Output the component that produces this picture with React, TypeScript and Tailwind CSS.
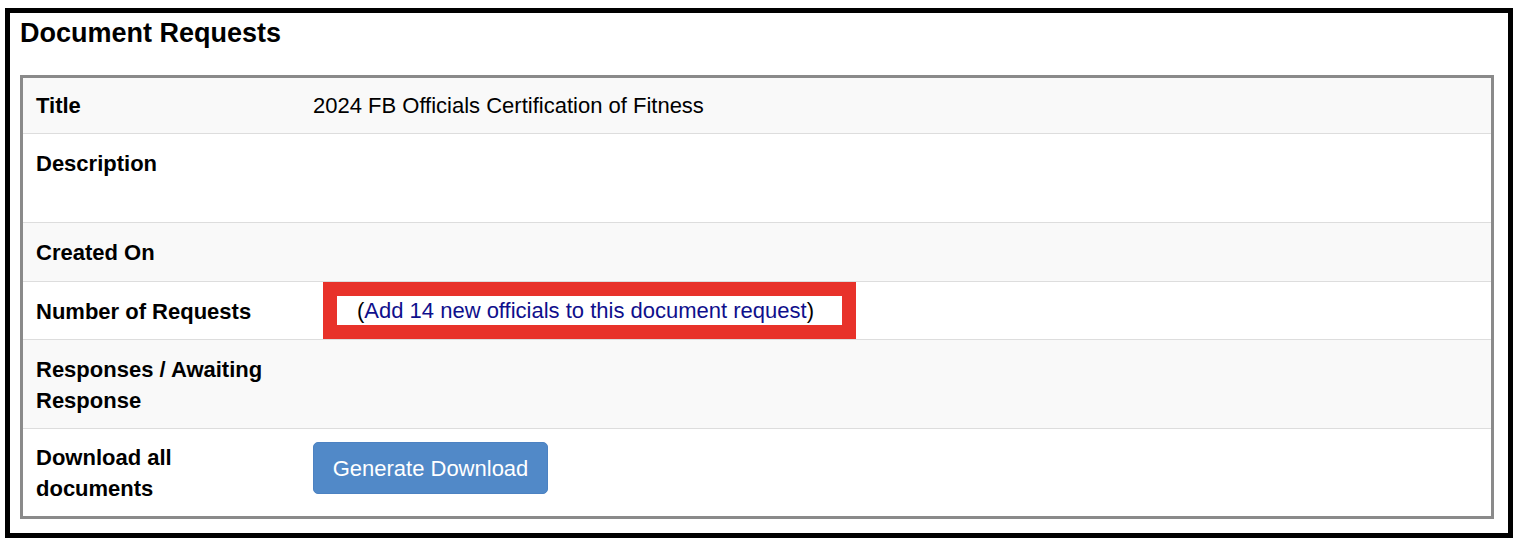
import React from 'react';

type Row = {
  label: React.ReactNode;
  value?: React.ReactNode;
  striped: boolean;
  pad: string;
  tall?: boolean;
  flush?: boolean;
};

const RequestsLink: React.FC = () => (
  <div className="flex h-[57px] w-[533px] items-center border-[14px] border-[#e8322a] bg-white pl-[20px] leading-[29px]">
    <span className="text-black">(</span>
    <a href="#" className="text-[#0f0f8c]">Add 14 new officials to this document request</a>
    <span className="text-black">)</span>
  </div>
);

const App: React.FC = () => {
  const rows: Row[] = [
    { label: 'Title', value: '2024 FB Officials Certification of Fitness', striped: true, pad: 'pt-[12px] pb-[12px]' },
    { label: 'Description', striped: false, tall: true, pad: 'pt-[14px] pb-[12px]' },
    { label: 'Created On', striped: true, pad: 'pt-[14px] pb-[13px]' },
    { label: 'Number of Requests', value: <RequestsLink />, striped: false, flush: true, pad: 'pt-[14px] pb-[12px]' },
    { label: <>Responses / Awaiting<br />Response</>, striped: true, pad: 'pt-[14px] pb-[12px]' },
    {
      label: <>Download all<br />documents</>,
      value: (
        <button className="flex h-[52px] w-[235px] items-center justify-center rounded-[5px] border border-[#4c82c2] bg-[#5189c8] text-white">
          Generate Download
        </button>
      ),
      striped: false,
      pad: 'pt-[13px] pb-[12px]',
    },
  ];

  return (
    <div className="min-h-[550px] bg-white pt-[8px] pl-[5px] font-['Liberation_Sans',Arial,sans-serif] text-black">
      <div className="h-[530px] w-[1508px] border-[5px] border-black pl-[10px] pr-[14px]">
        <h2 className="pt-[5px] mb-[27px] text-[27px] font-bold leading-[30px]">Document Requests</h2>

        <div className="border-[3px] border-[#8a8a8a] text-[22px] leading-[31px]">
          {rows.map((row, i) => (
            <div
              key={i}
              className={`flex ${i === 0 ? '' : 'border-t border-[#dddddd]'} ${row.striped ? 'bg-[#f9f9f9]' : 'bg-white'}`}
            >
              <div className={`w-[277px] shrink-0 px-[13px] font-bold ${row.pad}`}>{row.label}</div>
              <div
                className={`flex-1 ${row.flush ? 'pl-[23px]' : `px-[13px] ${row.pad}`} ${row.tall ? 'min-h-[88px]' : ''}`}
              >
                {row.value}
              </div>
            </div>
          ))}
        </div>
      </div>
    </div>
  );
};

export default App;
